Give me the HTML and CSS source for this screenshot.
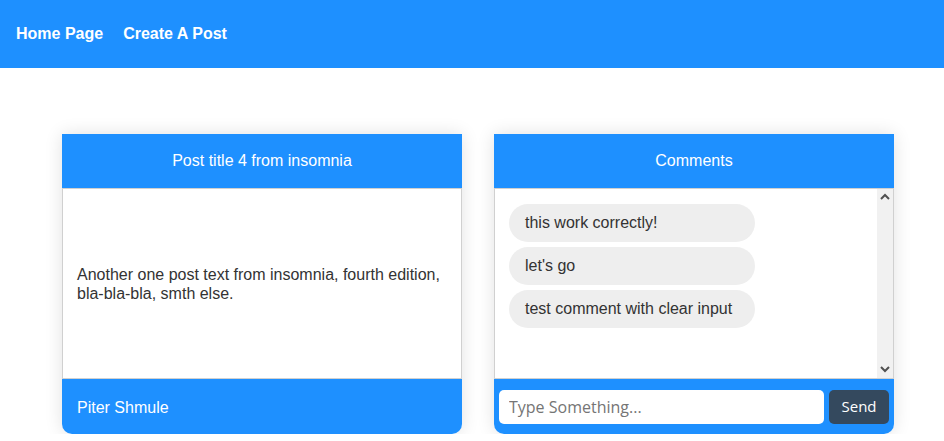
FILE: index.html
```html
<!DOCTYPE html>
<html>
<head>
<meta charset="utf-8">
<link rel="stylesheet" href="styles.css">
</head>
<body>
<header class="topbar">
  <a class="nav-link" href="#">Home Page</a>
  <a class="nav-link" href="#">Create A Post</a>
</header>
<main class="main">
  <section class="card">
    <div class="card-head">Post title 4 from insomnia</div>
    <div class="card-body post-body">
      <p class="post-text">Another one post text from insomnia, fourth edition, bla-bla-bla, smth else.</p>
    </div>
    <div class="card-foot author">Piter Shmule</div>
  </section>
  <section class="card">
    <div class="card-head">Comments</div>
    <div class="card-body comments-wrap">
      <div class="comments">
        <div class="comment">this work correctly!</div>
        <div class="comment">let's go</div>
        <div class="comment">test comment with clear input</div>
      </div>
      <div class="scrollbar">
        <svg class="chev" width="10" height="8" viewBox="0 0 10 8"><path d="M1 6 L5 2 L9 6" fill="none" stroke="#505050" stroke-width="2"/></svg>
        <svg class="chev" width="10" height="8" viewBox="0 0 10 8"><path d="M1 2 L5 6 L9 2" fill="none" stroke="#505050" stroke-width="2"/></svg>
      </div>
    </div>
    <div class="card-foot send-bar">
      <input class="send-input" type="text" placeholder="Type Something...">
      <button class="send-btn">Send</button>
    </div>
  </section>
</main>
</body>
</html>
```
FILE: styles.css
```css
* { box-sizing: border-box; }
body {
  margin: 0;
  font-family: "Liberation Sans", Arial, sans-serif;
  font-size: 16px;
  color: #333;
  background: #fff;
}
.topbar {
  height: 68px;
  background: #1e90ff;
  display: flex;
  align-items: center;
  padding: 0 16px;
  gap: 20px;
}
.nav-link {
  color: #fff;
  font-weight: bold;
  text-decoration: none;
  font-size: 16px;
}
.main {
  display: flex;
  gap: 32px;
  padding: 66px 0 0 62px;
}
.card {
  width: 400px;
  height: 300px;
  display: flex;
  flex-direction: column;
  border-radius: 0 0 10px 10px;
  overflow: hidden;
  box-shadow: 0 0 18px rgba(0,0,0,0.12);
}
.card-head {
  height: 54px;
  flex: none;
  background: #1e90ff;
  color: #fff;
  display: flex;
  align-items: center;
  justify-content: center;
}
.card-body {
  flex: 1;
  border: 1px solid #d0d0d0;
  min-height: 0;
}
.card-foot {
  height: 55px;
  flex: none;
  background: #1e90ff;
  color: #fff;
  display: flex;
  align-items: center;
}
.post-body {
  display: flex;
  align-items: center;
  padding: 0 14px;
}
.post-text {
  margin: 0;
  line-height: 19px;
  padding-top: 1px;
}
.author {
  padding: 2px 15px 0;
}
.comments-wrap {
  display: flex;
}
.comments {
  flex: 1;
  overflow: hidden;
  padding: 15px 14px;
  display: flex;
  flex-direction: column;
  gap: 5px;
}
.scrollbar {
  width: 16px;
  flex: none;
  background: #f1f1f1;
  display: flex;
  flex-direction: column;
  justify-content: space-between;
  align-items: center;
  padding: 4px 0 5px;
}
.chev { display: block; }
.comment {
  width: 246px;
  height: 38px;
  flex: none;
  background: #eee;
  border-radius: 19px;
  display: flex;
  align-items: center;
  padding: 0 16px;
  color: #333;
}
.send-bar {
  padding: 0 5px;
  gap: 5px;
}
.send-input {
  width: 325px;
  height: 34px;
  border: none;
  border-radius: 5px;
  padding: 0 10px;
  font-family: "Open Sans", "Noto Sans", sans-serif;
  font-size: 16px;
  color: #333;
  outline: none;
}
.send-input::placeholder { color: #757575; }
.send-btn {
  width: 60px;
  height: 34px;
  border: none;
  border-radius: 5px;
  background: #34495e;
  color: #fff;
  font-family: "Open Sans", "Noto Sans", sans-serif;
  font-size: 15px;
  padding: 0 0 2px;
}
```
